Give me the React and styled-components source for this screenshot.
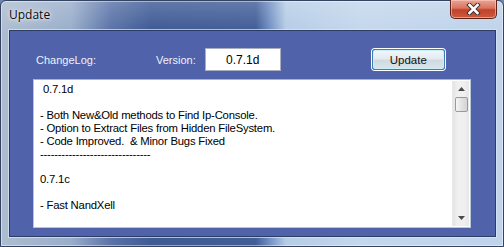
import React from "react";
import styled, { createGlobalStyle } from "styled-components";

const GlobalStyle = createGlobalStyle`
  html, body {
    margin: 0;
    padding: 0;
    background: #6d84b5;
  }
  body {
    font-family: "Liberation Sans", Arial, sans-serif;
  }
`;

const Window = styled.div`
  width: 504px;
  height: 247px;
  box-sizing: border-box;
  display: flex;
  flex-direction: column;
  padding: 0 7px 9px 8px;
  border: 1px solid #34435f;
  border-radius: 6px 6px 0 0;
  background:
    linear-gradient(180deg, rgba(255,255,255,0.18) 0%, rgba(255,255,255,0) 30px),
    linear-gradient(90deg, #aebdd0 0px, #9aaecb 70px, #5a73a8 110px, #3f5b95 150px, #425e98 255px, #6f8ec2 268px, #b6cde6 285px, #c4d7ec 360px, #bfd3ea 100%);
  box-shadow: inset 0 0 0 1px rgba(255,255,255,0.45);
`;

const TitleBar = styled.div`
  height: 29px;
  display: flex;
  align-items: flex-start;
  justify-content: space-between;
`;

const Title = styled.div`
  padding-top: 5px;
  font-family: "Open Sans", "Noto Sans", sans-serif;
  font-size: 12px;
  color: #0b0b0b;
  text-shadow: 0 0 6px rgba(255,255,255,0.9), 0 0 3px rgba(255,255,255,0.9);
`;

const CloseButton = styled.div`
  width: 45px;
  height: 18px;
  margin-top: -1px;
  margin-right: -1px;
  display: flex;
  align-items: center;
  justify-content: center;
  border: 1px solid #5e2219;
  border-top: none;
  border-radius: 0 0 5px 5px;
  background: linear-gradient(180deg, #e9a595 0%, #d8745f 45%, #c2412a 55%, #cc5a3f 100%);
  box-shadow: inset 0 0 0 1px rgba(255,210,200,0.55);
`;

const Client = styled.div`
  flex: 1;
  display: flex;
  flex-direction: column;
  background: #4f62aa;
  border: 1px solid #2d3c62;
  box-shadow: 0 0 0 1px rgba(220,232,246,0.7);
  padding: 17px 24px 8px 23px;
`;

const TopRow = styled.div`
  display: flex;
  align-items: center;
  height: 23px;
`;

const Label = styled.span`
  font-size: 11px;
  color: #eef2fa;
  width: ${(p) => p.$w}px;
  padding-left: ${(p) => p.$pl || 0}px;
`;

const VersionBox = styled.div`
  width: 74px;
  height: 21px;
  margin-left: 9px;
  display: flex;
  align-items: center;
  justify-content: center;
  background: #fff;
  border: 1px solid #a9afc0;
  font-size: 12px;
  color: #000;
`;

const Button = styled.div`
  width: 71px;
  height: 19px;
  margin-left: 91px;
  display: flex;
  align-items: center;
  justify-content: center;
  font-size: 11.5px;
  color: #111;
  border: 1px solid #3c7fb1;
  border-radius: 3px;
  background: linear-gradient(180deg, #f2f6f9 0%, #e3ebf0 48%, #cfd9e1 52%, #dbe4ea 100%);
  box-shadow: inset 0 0 0 1px #c9f0ff, 0 0 0 1px #ffffff;
`;

const LogBox = styled.div`
  flex: 1;
  margin-top: 8px;
  display: flex;
  background: #fff;
  border: 1px solid #b5c6d6;
  border-top-color: #9fb8d2;
  padding: 1px;
`;

const LogText = styled.div`
  flex: 1;
  padding: 2px 0 0 5px;
  font-size: 11.3px;
  line-height: 12.9px;
  letter-spacing: -0.2px;
  color: #000;
  white-space: pre;
  overflow: hidden;
`;

const ScrollBar = styled.div`
  width: 16px;
  display: flex;
  flex-direction: column;
  align-items: center;
  background: linear-gradient(90deg, #e4e4e4, #f0f0f0 30%, #f0f0f0 70%, #e6e6e6);
  border-left: 1px solid #e8e8e8;
`;

const Arrow = styled.div`
  height: 16px;
  display: flex;
  align-items: center;
  justify-content: center;
`;

const Thumb = styled.div`
  width: 13px;
  height: 15px;
  box-sizing: border-box;
  border: 1px solid #9a9a9a;
  border-radius: 2px;
  background: linear-gradient(90deg, #f6f6f6, #e2e2e2 50%, #d4d4d4 100%);
`;

const Track = styled.div`
  flex: 1;
`;

const log = [
  " 0.7.1d",
  "",
  "- Both New&Old methods to Find Ip-Console.",
  "- Option to Extract Files from Hidden FileSystem.",
  "- Code Improved.  & Minor Bugs Fixed",
  "-------------------------------",
  "",
  "0.7.1c",
  "",
  "- Fast NandXell",
];

export default function App() {
  return (
    <>
      <GlobalStyle />
      <Window>
        <TitleBar>
          <Title>Update</Title>
          <CloseButton>
            <svg width="15" height="12" viewBox="0 0 15 12">
              <path d="M3.5 2 L11.5 10 M11.5 2 L3.5 10" stroke="#3a2a28" strokeWidth="4.4" strokeLinecap="square" />
              <path d="M3.5 2 L11.5 10 M11.5 2 L3.5 10" stroke="#ffffff" strokeWidth="2.6" strokeLinecap="square" />
            </svg>
          </CloseButton>
        </TitleBar>
        <Client>
          <TopRow>
            <Label $w={120} $pl={3}>ChangeLog:</Label>
            <Label>Version:</Label>
            <VersionBox>0.7.1d</VersionBox>
            <Button>Update</Button>
          </TopRow>
          <LogBox>
            <LogText>{log.join("\n")}</LogText>
            <ScrollBar>
              <Arrow>
                <svg width="7" height="4" viewBox="0 0 7 4"><path d="M0 4 L3.5 0 L7 4 Z" fill="#4a4a4a" /></svg>
              </Arrow>
              <Thumb />
              <Track />
              <Arrow>
                <svg width="7" height="4" viewBox="0 0 7 4"><path d="M0 0 L3.5 4 L7 0 Z" fill="#4a4a4a" /></svg>
              </Arrow>
            </ScrollBar>
          </LogBox>
        </Client>
      </Window>
    </>
  );
}
